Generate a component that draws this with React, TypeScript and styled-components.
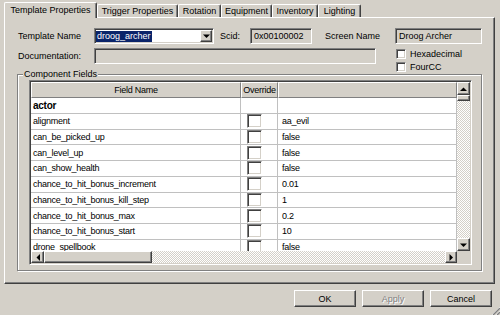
import React from 'react';
import styled, { createGlobalStyle, css } from 'styled-components';

const FACE = '#d4d0c8';
const SHADOW = '#808080';
const DARK = '#404040';
const LIGHT = '#ffffff';
const GRIDLINE = '#c0c0c0';

const GlobalStyle = createGlobalStyle`
  html, body {
    margin: 0;
    padding: 0;
    background: ${FACE};
  }
  body {
    font-family: "Liberation Sans", Arial, sans-serif;
    font-size: 9px;
    color: #000;
  }
  * {
    box-sizing: border-box;
  }
`;

const raised = css`
  border: 1px solid;
  border-color: ${LIGHT} ${DARK} ${DARK} ${LIGHT};
  box-shadow: inset -1px -1px ${SHADOW};
`;

const sunken = css`
  border: 1px solid;
  border-color: ${SHADOW} ${LIGHT} ${LIGHT} ${SHADOW};
  box-shadow: inset 1px 1px ${DARK}, inset -1px -1px ${FACE};
`;

const checker = css`
  background: repeating-conic-gradient(${FACE} 0 25%, ${LIGHT} 0 50%) 0 0 / 2px 2px;
`;

const Window = styled.div`
  position: relative;
  width: 500px;
  height: 315px;
  background: ${FACE};
  display: flex;
  flex-direction: column;
  overflow: hidden;
`;

const TabStrip = styled.div`
  position: relative;
  z-index: 1;
  display: flex;
  align-items: flex-end;
  height: 17px;
  padding-left: 4px;
`;

const Tab = styled.div<{ $w: number; $active?: boolean }>`
  width: ${(p) => p.$w}px;
  height: ${(p) => (p.$active ? 16 : 13)}px;
  margin-bottom: ${(p) => (p.$active ? -1 : 0)}px;
  background: ${FACE};
  border-top: 1px solid ${LIGHT};
  border-left: 1px solid ${LIGHT};
  border-right: 1px solid ${DARK};
  box-shadow: inset -1px 0 ${SHADOW};
  border-radius: 2px 2px 0 0;
  display: flex;
  align-items: center;
  justify-content: center;
  padding-bottom: ${(p) => (p.$active ? 2 : 0)}px;
  white-space: nowrap;
`;

const Panel = styled.div`
  margin-left: 4px;
  width: 491px;
  height: 267px;
  border: 1px solid;
  border-color: ${LIGHT} ${DARK} ${DARK} ${LIGHT};
  box-shadow: inset -1px -1px ${SHADOW};
  padding: 10px 0 0 12px;
  display: flex;
  flex-direction: column;
`;

const FormRow = styled.div<{ $top?: number; $h: number }>`
  display: flex;
  align-items: flex-start;
  height: ${(p) => p.$h}px;
  margin-top: ${(p) => p.$top ?? 0}px;
  padding-left: 1px;
`;

const Label = styled.span<{ $w: number; $gap?: number }>`
  width: ${(p) => p.$w}px;
  margin-left: ${(p) => p.$gap ?? 0}px;
  height: 16px;
  line-height: 16px;
  white-space: nowrap;
  flex: none;
`;

const Field = styled.div<{ $w: number; $white?: boolean }>`
  ${sunken};
  width: ${(p) => p.$w}px;
  height: 16px;
  flex: none;
  background: ${(p) => (p.$white ? LIGHT : FACE)};
  padding: 0 3px;
  line-height: 14px;
  white-space: nowrap;
  overflow: hidden;
  display: flex;
  align-items: center;
`;

const Selected = styled.span`
  background: #0a246a;
  color: ${LIGHT};
  line-height: 11px;
  padding: 0 1px;
  margin-left: -2px;
`;

const DropButton = styled.div`
  ${raised};
  margin-left: auto;
  margin-right: -2px;
  width: 12px;
  height: 12px;
  background: ${FACE};
  display: flex;
  align-items: center;
  justify-content: center;
`;

const CheckColumn = styled.div`
  display: flex;
  flex-direction: column;
  gap: 3px;
  margin: 1px 0 0 20px;
`;

const CheckRow = styled.label`
  display: flex;
  align-items: center;
  height: 10px;
  gap: 4px;
  white-space: nowrap;
`;

const CheckBox = styled.span<{ $w: number; $h: number }>`
  ${sunken};
  display: block;
  width: ${(p) => p.$w}px;
  height: ${(p) => p.$h}px;
  background: ${LIGHT};
  flex: none;
`;

const GroupBox = styled.fieldset`
  margin: 0;
  padding: 0;
  width: 465px;
  height: 201px;
  min-width: 0;
  border: 1px solid ${SHADOW};
  box-shadow: inset 1px 1px ${LIGHT}, 1px 1px ${LIGHT};
`;

const Legend = styled.legend`
  margin-left: 5px;
  padding: 0 1px;
  height: 9px;
  line-height: 9px;
  background: ${FACE};
`;

const Grid = styled.div`
  ${sunken};
  margin: 1px 0 0 11px;
  width: 443px;
  height: 185px;
  padding: 1px;
  display: grid;
  grid-template-columns: 426px 13px;
  grid-template-rows: 169px 12px;
  background: ${FACE};
`;

const DataArea = styled.div`
  background: ${LIGHT};
  overflow: hidden;
  letter-spacing: -0.25px;
`;

const GridRow = styled.div<{ $h: number }>`
  display: grid;
  grid-template-columns: 210px 37px 179px;
  height: ${(p) => p.$h}px;
`;

const HeaderCell = styled.div`
  background: ${FACE};
  border: 1px solid;
  border-color: ${LIGHT} ${SHADOW} ${SHADOW} ${LIGHT};
  display: flex;
  align-items: center;
  justify-content: center;
  white-space: nowrap;
  overflow: hidden;
`;

const Cell = styled.div<{ $bold?: boolean; $pad?: number }>`
  border-right: 1px solid ${GRIDLINE};
  border-bottom: 1px solid ${GRIDLINE};
  padding-left: ${(p) => p.$pad ?? 2}px;
  font-weight: ${(p) => (p.$bold ? 700 : 400)};
  font-size: ${(p) => (p.$bold ? 10 : 9)}px;
  display: flex;
  align-items: center;
  white-space: nowrap;
  overflow: hidden;
`;

const OverrideBox = styled.span`
  ${sunken};
  display: block;
  width: 15px;
  height: 14px;
  margin-left: 6px;
  background: ${LIGHT};
`;

const VScroll = styled.div`
  display: flex;
  flex-direction: column;
  ${checker};
`;

const HScroll = styled.div`
  display: flex;
  ${checker};
`;

const ScrollButton = styled.div<{ $w: number; $h: number }>`
  ${raised};
  width: ${(p) => p.$w}px;
  height: ${(p) => p.$h}px;
  flex: none;
  background: ${FACE};
  display: flex;
  align-items: center;
  justify-content: center;
`;

const Track = styled.span`
  flex: 1;
`;

const Corner = styled.div`
  background: ${FACE};
`;

const ButtonRow = styled.div`
  display: flex;
  justify-content: flex-end;
  gap: 6px;
  margin-top: 6px;
  padding-right: 8px;
`;

const PushButton = styled.button<{ $disabled?: boolean }>`
  ${raised};
  width: 62px;
  height: 17px;
  padding: 0;
  background: ${FACE};
  font: inherit;
  color: ${(p) => (p.$disabled ? SHADOW : '#000')};
  text-shadow: ${(p) => (p.$disabled ? `1px 1px ${LIGHT}` : 'none')};
`;

const Grip = styled.svg`
  position: absolute;
  right: 0;
  bottom: 0;
`;

type Dir = 'up' | 'down' | 'left' | 'right';

const arrowPoints: Record<Dir, string> = {
  up: '0,4 7,4 3.5,0.5',
  down: '0,0.5 7,0.5 3.5,4',
  left: '4,0 4,7 0.5,3.5',
  right: '0.5,0 0.5,7 4,3.5',
};

function Arrow({ dir }: { dir: Dir }) {
  const vertical = dir === 'up' || dir === 'down';
  return (
    <svg width={vertical ? 7 : 4} height={vertical ? 4 : 7} viewBox={vertical ? '0 0 7 4' : '0 0 4 7'}>
      <polygon points={arrowPoints[dir]} fill="#000" />
    </svg>
  );
}

const tabs = [
  { label: 'Template Properties', w: 93, active: true },
  { label: 'Trigger Properties', w: 81 },
  { label: 'Rotation', w: 43 },
  { label: 'Equipment', w: 51 },
  { label: 'Inventory', w: 46 },
  { label: 'Lighting', w: 43 },
];

const fields = [
  { name: 'actor', group: true },
  { name: 'alignment', value: 'aa_evil' },
  { name: 'can_be_picked_up', value: 'false' },
  { name: 'can_level_up', value: 'false' },
  { name: 'can_show_health', value: 'false' },
  { name: 'chance_to_hit_bonus_increment', value: '0.01' },
  { name: 'chance_to_hit_bonus_kill_step', value: '1' },
  { name: 'chance_to_hit_bonus_max', value: '0.2' },
  { name: 'chance_to_hit_bonus_start', value: '10' },
  { name: 'drone_spellbook', value: 'false' },
];

export default function App(): React.JSX.Element {
  return (
    <>
      <GlobalStyle />
      <Window>
        <TabStrip>
          {tabs.map((t) => (
            <Tab key={t.label} $w={t.w} $active={t.active}>
              {t.label}
            </Tab>
          ))}
        </TabStrip>
        <Panel>
          <FormRow $h={16}>
            <Label $w={76}>Template Name</Label>
            <Field $w={120} $white>
              <Selected>droog_archer</Selected>
              <DropButton>
                <Arrow dir="down" />
              </DropButton>
            </Field>
            <Label $w={30} $gap={6}>Scid:</Label>
            <Field $w={62}>0x00100002</Field>
            <Label $w={70} $gap={13}>Screen Name</Label>
            <Field $w={87}>Droog Archer</Field>
          </FormRow>
          <FormRow $h={22} $top={4}>
            <Label $w={76}>Documentation:</Label>
            <Field $w={282} />
            <CheckColumn>
              <CheckRow>
                <CheckBox $w={10} $h={10} />
                Hexadecimal
              </CheckRow>
              <CheckRow>
                <CheckBox $w={10} $h={10} />
                FourCC
              </CheckRow>
            </CheckColumn>
          </FormRow>
          <GroupBox>
            <Legend>Component Fields</Legend>
            <Grid>
              <DataArea>
                <GridRow $h={16}>
                  <HeaderCell>Field Name</HeaderCell>
                  <HeaderCell>Override</HeaderCell>
                  <HeaderCell />
                </GridRow>
                {fields.map((f) => (
                  <GridRow key={f.name} $h={15.75}>
                    <Cell $bold={f.group}>{f.name}</Cell>
                    <Cell $pad={0}>{!f.group && <OverrideBox />}</Cell>
                    <Cell $pad={4}>{f.value}</Cell>
                  </GridRow>
                ))}
              </DataArea>
              <VScroll>
                <ScrollButton $w={13} $h={13}>
                  <Arrow dir="up" />
                </ScrollButton>
                <ScrollButton $w={13} $h={6} />
                <Track />
                <ScrollButton $w={13} $h={13}>
                  <Arrow dir="down" />
                </ScrollButton>
              </VScroll>
              <HScroll>
                <ScrollButton $w={13} $h={12}>
                  <Arrow dir="left" />
                </ScrollButton>
                <ScrollButton $w={108} $h={12} />
                <Track />
                <ScrollButton $w={12} $h={12}>
                  <Arrow dir="right" />
                </ScrollButton>
              </HScroll>
              <Corner />
            </Grid>
          </GroupBox>
        </Panel>
        <ButtonRow>
          <PushButton>OK</PushButton>
          <PushButton $disabled>Apply</PushButton>
          <PushButton>Cancel</PushButton>
        </ButtonRow>
        <Grip width="11" height="11" viewBox="0 0 11 11">
          {[0, 4, 8].map((o) => (
            <g key={o}>
              <line x1={11 - o} y1={11} x2={11} y2={11 - o} stroke={LIGHT} strokeWidth={1} />
              <line x1={11 - o + 1} y1={11} x2={11} y2={11 - o + 1} stroke={SHADOW} strokeWidth={1.4} />
            </g>
          ))}
        </Grip>
      </Window>
    </>
  );
}
